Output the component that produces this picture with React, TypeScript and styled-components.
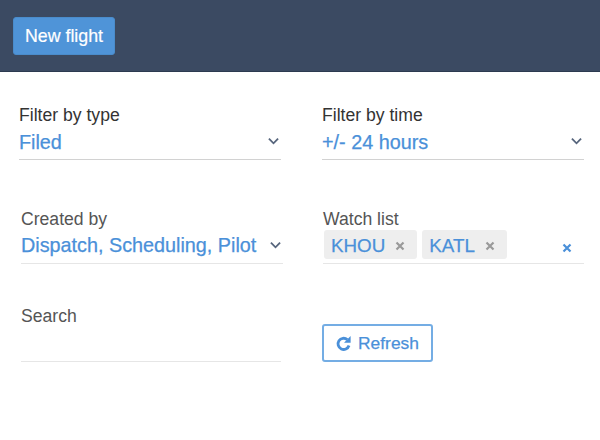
import * as React from "react";
import { FC } from "react";
import styled, { createGlobalStyle } from "styled-components";

const GlobalStyle = createGlobalStyle`
    html, body {
        margin: 0;
        padding: 0;
        background: #fff;
        font-family: "Liberation Sans", Arial, sans-serif;
    }
`;

const Page = styled.div`
    width: 600px;
    height: 440px;
    overflow: hidden;
`;

const Header = styled.header`
    height: 71px;
    background: #3b4a62;
    border-bottom: 1px solid #2c3a50;
    padding-left: 13px;
    display: flex;
    align-items: flex-start;
`;

const PrimaryButton = styled.button`
    margin-top: 17px;
    width: 102px;
    height: 38px;
    padding: 0;
    border: 1px solid #4a8ccb;
    border-radius: 3px;
    background: #4f94d8;
    color: #fff;
    font: 17.8px "Liberation Sans", Arial, sans-serif;
    -webkit-text-stroke: 0.2px #fff;
`;

const Filters = styled.div`
    display: grid;
    grid-template-columns: 262px 262px;
    column-gap: 41px;
    padding: 32px 0 0 19px;
`;

const Field = styled.div<{ $height: number; $inset?: number; $overhang?: number }>`
    height: ${p => p.$height}px;
    margin-left: ${p => p.$inset ?? 0}px;
    margin-right: ${p => -(p.$overhang ?? 0)}px;
`;

const Label = styled.div<{ $soft?: boolean; $lift?: number }>`
    height: 23px;
    line-height: 23px;
    font-size: 17.6px;
    margin-top: ${p => -(p.$lift ?? 0)}px;
    margin-bottom: ${p => p.$lift ?? 0}px;
    color: ${p => p.$soft ? "#555" : "#333"};
`;

const Control = styled.div<{ $soft?: boolean }>`
    height: 32px;
    border-bottom: 1px solid ${p => p.$soft ? "#e6e6e6" : "#d2d2d2"};
    display: flex;
    align-items: center;
    justify-content: space-between;
    padding-right: 1px;
`;

const Value = styled.span<{ $lift?: number }>`
    color: #4a90d9;
    font-size: 19.8px;
    -webkit-text-stroke: 0.25px #4a90d9;
    margin-top: ${p => p.$lift ?? -2}px;
    white-space: nowrap;
`;

const Chips = styled.div`
    display: flex;
    gap: 5px;
    margin-left: 1px;
    margin-bottom: 5px;
`;

const Chip = styled.div`
    height: 29px;
    box-sizing: border-box;
    border-radius: 3px;
    background: #eee;
    padding: 2px 12px 0 7px;
    display: flex;
    align-items: center;
    gap: 10px;
    color: #4a90d9;
    font-size: 18.8px;
    -webkit-text-stroke: 0.25px #4a90d9;
`;

const ChipRemove = styled.svg`
    width: 10px;
    height: 10px;
    color: #999;
    margin-top: 1px;
`;

const ClearAll = styled.svg`
    width: 10px;
    height: 10px;
    color: #4a90d9;
    margin-right: 11px;
    margin-top: 2px;
`;

const Chevron = styled.svg`
    width: 11px;
    height: 8px;
    color: #56657c;
    margin-top: -5px;
    margin-right: 1px;
`;

const RefreshButton = styled.button`
    width: 111px;
    height: 38px;
    margin-top: 18px;
    padding: 0;
    border: 2px solid #74ade4;
    border-radius: 3px;
    background: #fff;
    color: #4a90d9;
    font: 17.4px "Liberation Sans", Arial, sans-serif;
    -webkit-text-stroke: 0.25px #4a90d9;
    display: flex;
    align-items: center;
    justify-content: center;
    gap: 6px;
`;

const DownIcon: FC = () => <Chevron viewBox="0 0 12 8" fill="none">
    <path d="M1 1.5 L6 6.5 L11 1.5" stroke="currentColor" strokeWidth="2" />
</Chevron>;

const Cross: FC = () => <path d="M1.5 1.5 L8.5 8.5 M8.5 1.5 L1.5 8.5" stroke="currentColor" strokeWidth="2.2" />;

export default function App() {
    return <Page>
        <GlobalStyle />
        <Header>
            <PrimaryButton>New flight</PrimaryButton>
        </Header>
        <Filters>
            <Field $height={104}>
                <Label>Filter by type</Label>
                <Control>
                    <Value>Filed</Value>
                    <DownIcon />
                </Control>
            </Field>
            <Field $height={104}>
                <Label>Filter by time</Label>
                <Control>
                    <Value>+/- 24 hours</Value>
                    <DownIcon />
                </Control>
            </Field>
            <Field $height={98} $inset={2} $overhang={2}>
                <Label $soft>Created by</Label>
                <Control $soft>
                    <Value $lift={-4}>Dispatch, Scheduling, Pilot</Value>
                    <DownIcon />
                </Control>
            </Field>
            <Field $height={98} $inset={1}>
                <Label $soft>Watch list</Label>
                <Control $soft>
                    <Chips>
                        <Chip>KHOU<ChipRemove viewBox="0 0 10 10"><Cross /></ChipRemove></Chip>
                        <Chip>KATL<ChipRemove viewBox="0 0 10 10"><Cross /></ChipRemove></Chip>
                    </Chips>
                    <ClearAll viewBox="0 0 10 10"><Cross /></ClearAll>
                </Control>
            </Field>
            <Field $height={80} $inset={2}>
                <Label $soft $lift={1}>Search</Label>
                <Control $soft />
            </Field>
            <Field $height={80}>
                <RefreshButton>
                    <svg width="16" height="17" viewBox="0 0 16 17" fill="none">
                        <path d="M13 10.5 A5.6 5.6 0 1 1 11.3 4.6" stroke="currentColor" strokeWidth="2.8" />
                        <path d="M14.6 1 L14.6 7.8 L8 7.8 Z" fill="currentColor" />
                    </svg>
                    Refresh
                </RefreshButton>
            </Field>
        </Filters>
    </Page>;
}
